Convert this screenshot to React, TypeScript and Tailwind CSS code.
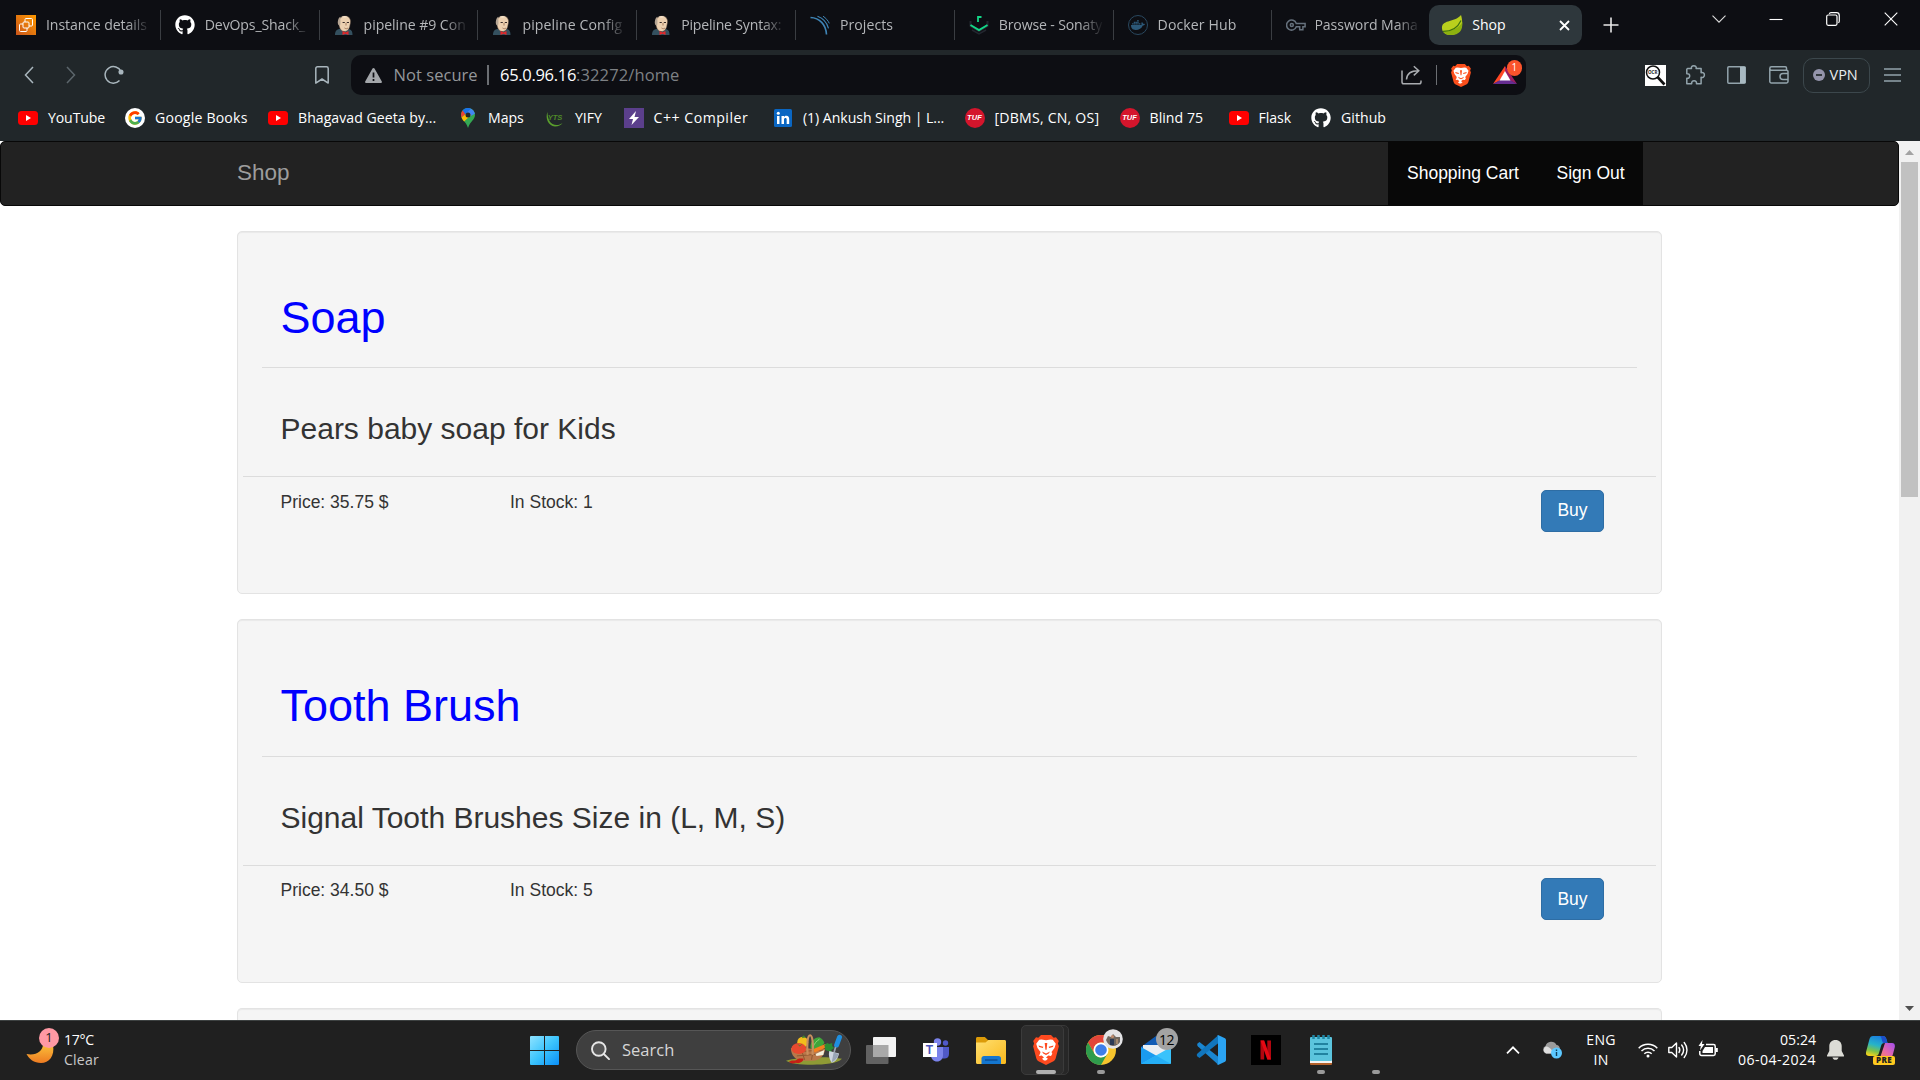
import React from "react";
import { FaGithub, FaDocker } from "react-icons/fa";
import { FcGoogle } from "react-icons/fc";

const JenkinsIcon = () => (
  <svg width="20" height="20" viewBox="0 0 20 20">
    <path d="M1 20c0-4 2-6 5-6l4 3 5-3c3 1 3.500 3 3.500 6z" fill="#34505f" />
    <path d="M5 5C6 1 14-1 16 4c1 2 .5 4 0 6-.5 4-2.500 6.500-5.500 6.500C7 16.500 5.500 13 5 10 3.500 9 3.500 6 5 5z" fill="#ecd0b0" stroke="#57473d" strokeWidth=".5" />
    <path d="M4.600 10C3.300 7 4 3 6.500 1.800 6 5 7 8 6 11z" fill="#b5a594" />
    <path d="M7.500 1.800C9 .6 12 .6 13.500 1.800 12 3 9 3 7.500 1.800z" fill="#f6e2c8" />
    <path d="M8.600 7.500h2.200M12.800 7.500H15" stroke="#3a2c28" strokeWidth="1.200" fill="none" />
    <path d="M12 8v2.500M10.500 13c1.500 1 2.500.8 3.500 0" stroke="#9b6f54" strokeWidth=".9" fill="none" />
    <path d="M8.500 16l3 1.600 3-1.600v4l-3-1.300-3 1.300z" fill="#e0282b" />
  </svg>
);

const AwsIcon = () => (
  <svg width="20" height="20" viewBox="0 0 20 20">
    <defs>
      <linearGradient id="aws" x1="0" y1="1" x2="1" y2="0">
        <stop offset="0" stopColor="#c9551b" />
        <stop offset="1" stopColor="#ff9a00" />
      </linearGradient>
    </defs>
    <rect width="20" height="20" fill="url(#aws)" />
    <g fill="none" stroke="#fff" strokeWidth="1">
      <path d="M9 7V4.500c0-.6.4-1 1-1h5.500c.6 0 1 .4 1 1V10c0 .6-.4 1-1 1H13" />
      <rect x="7" y="7" width="6" height="6" rx="1" />
      <path d="M7 9H4.500c-.6 0-1 .4-1 1v5.500c0 .6.4 1 1 1H10c.6 0 1-.4 1-1V13" />
    </g>
  </svg>
);

const SonarIcon = () => (
  <svg width="20" height="20" viewBox="0 0 20 20" fill="none" stroke="#3f84b5">
    <path d="M.5 2.500c9 .3 15.500 7 16 17" strokeWidth="1.600" />
    <path d="M7.500 1.300c5.500 2 9.500 6.500 11 12" strokeWidth="1.200" />
    <path d="M13 1.200c2.800 1.800 5 4.300 6.300 7.200" strokeWidth="1" />
  </svg>
);

const SonatypeIcon = () => (
  <svg width="20" height="20" viewBox="0 0 20 20" fill="none">
    <path d="M1.500 6v5l8.500 5 8.500-5V6" stroke="#23262f" strokeWidth="2" />
    <path d="M3 15l7 4 7-4" stroke="#23262f" strokeWidth="1.500" />
    <path d="M1.500 10l8.500 5 8.500-5" stroke="#13d687" strokeWidth="2" />
    <path d="M9 7V2h3.500" stroke="#13d687" strokeWidth="1.800" />
  </svg>
);

const DockerIcon = () => (
  <div className="flex size-5 items-center justify-center rounded-full border border-[#29485f] text-[#2c5878]">
    <FaDocker size={14} />
  </div>
);

const KeyIcon = () => (
  <svg width="20" height="20" viewBox="0 0 20 20" fill="none" stroke="#66717d" strokeWidth="1.500">
    <path d="M10.300 8.500a5 5 0 1 0 0 3.200h3.400v3h3.200v-3h2.200V8.500z" />
    <circle cx="5.800" cy="10" r="1.500" />
  </svg>
);

const SpringIcon = () => (
  <svg width="22" height="22" viewBox="0 0 22 24" preserveAspectRatio="none">
    <path d="M20 1c2.500 9 2 21.500-10.500 22C4 23 .5 19 1 14 2 6 14 9 20 1z" fill="#b9cf1d" />
    <path d="M21.300 9c.5 9-3 13.800-11.300 14-4 0-7-1.800-8-4.300C12 18.500 18 15 21.300 9z" fill="#8db10f" />
    <path d="M2 19C11 19 16.500 15.500 20 7" stroke="#3f7110" strokeWidth="1.200" fill="none" />
  </svg>
);

const BraveIcon = ({ width, height, color }: { width: number; height: number; color: string }) => (
  <svg width={width} height={height} viewBox="0 0 26 30" preserveAspectRatio="none">
    <path d="M8 0h10l2.700 2.800 2.300-.5L25.800 6l-.9 2.400 1 2.800-3.200 12c-.4 1.500-1.200 2.400-2.200 3.100L13 30l-7.500-3.700c-1-.7-1.800-1.600-2.200-3.100L.1 11.200l1-2.800L.2 6 3 2.300l2.300.5z" fill={color} />
    <path d="M8.500 4.500l4.500.8 4.500-.8 2.300.3 3 4-1.300 4.200-3 4 .8 1.800-1.300 2.200-2.700-.6-2.300 2 2 1.300-2 1.800-2 0-2-1.800 2-1.300-2.300-2-2.700.6L7 18.800 7.500 17l-3-4-1.300-4.200 3-4z" fill="#fff" />
    <path d="M5.500 10.500l4.800 1.200-.4 1.400-3.800-1zM20.500 10.500l-4.800 1.200.4 1.400 3.800-1zM11.700 8h2.600l-.7 6.800h-1.200zM9 16.500l4 2 4-2-1.200 2L13 20l-2.800-1.500z" fill={color} />
  </svg>
);

const YoutubeIcon = () => (
  <svg width="20" height="20" viewBox="0 0 20 20">
    <rect y="3" width="20" height="14" rx="3.500" fill="#f00" />
    <path d="M8 7l5 3-5 3z" fill="#fff" />
  </svg>
);

const MapsIcon = () => (
  <svg width="20" height="20" viewBox="0 0 20 20">
    <path d="M10 0C6 0 3 3 3 7c0 4.500 5 6.500 7 13 2-6.500 7-8.500 7-13 0-4-3-7-7-7z" fill="#34a853" />
    <path d="M4.600 2.500C3 4.500 2.600 7 3.500 9.500L9 5z" fill="#ea4335" />
    <path d="M4.600 2.500C7-.5 11-.6 13 .7L8 7z" fill="#1a73e8" />
    <path d="M13 .7c2 1 3.400 2.700 3.900 5L11 9 9 4.500z" fill="#4285f4" />
    <path d="M3.500 9.500c.5 1.600 1.500 2.500 2.600 4L13 7 9 5z" fill="#fbbc04" />
    <circle cx="10" cy="7" r="2.500" fill="#22282b" />
  </svg>
);

const YtsIcon = () => (
  <div className="relative flex size-5 items-center justify-center">
    <svg width="20" height="20" viewBox="0 0 20 20" className="absolute inset-0">
      <path d="M2.500 4C0 10 3 18 10 18.500c3.500 0 6-1.500 7.500-3.500C14 18 7 18 4.500 13 3 10 2.500 7 2.500 4z" fill="#5a9e2d" />
    </svg>
    <span className="relative font-['Liberation_Sans'] text-[7.500px] font-bold italic text-[#4f8a28]">YTS</span>
  </div>
);

const BoltIcon = () => (
  <svg width="20" height="20" viewBox="0 0 20 20">
    <rect width="20" height="20" fill="#5b3f8c" />
    <path d="M12 3L5 11h4l-1.500 6L15 9h-4.500z" fill="#fff" />
  </svg>
);

const LinkedinIcon = () => (
  <svg width="20" height="20" viewBox="0 0 20 20">
    <rect x="1" y="1" width="18" height="18" rx="1.500" fill="#0a66c2" />
    <path d="M4 8h2.500v8H4zM8.500 8H11v1.200C11.500 8.300 12.300 7.800 13.400 7.800c2 0 2.800 1.300 2.800 3.400V16h-2.500v-4.300c0-1-.4-1.700-1.200-1.700-.9 0-1.500.7-1.500 1.700V16H8.500z" fill="#fff" />
    <circle cx="5.300" cy="5.300" r="1.500" fill="#fff" />
  </svg>
);

const TufIcon = () => (
  <div className="flex size-5 items-center justify-center rounded-full bg-[#d4152c] font-['Liberation_Sans'] text-[7.500px] font-bold italic text-white">TUF</div>
);

const tabs = [
  { icon: <AwsIcon />, title: "Instance details", cls: "tracking-[-0.100px]" },
  { icon: <FaGithub size={20} className="text-white" />, title: "DevOps_Shack_", cls: "tracking-[-0.150px]" },
  { icon: <JenkinsIcon />, title: "pipeline #9 Con", cls: "tracking-[-0.050px]" },
  { icon: <JenkinsIcon />, title: "pipeline Config", cls: "tracking-[0.120px]" },
  { icon: <JenkinsIcon />, title: "Pipeline Syntax:", cls: "tracking-[-0.200px]" },
  { icon: <SonarIcon />, title: "Projects", cls: "tracking-[0.050px]" },
  { icon: <SonatypeIcon />, title: "Browse - Sonaty", cls: "tracking-[-0.150px]" },
  { icon: <DockerIcon />, title: "Docker Hub", cls: "tracking-[0.100px]" },
  { icon: <KeyIcon />, title: "Password Mana", cls: "tracking-[-0.050px] -ml-[2px]" },
];

function TabStrip() {
  return (
    <div className="flex h-[50px] bg-[#0d0e13]">
      {tabs.map((t, i) => (
        <div key={i} className="relative flex w-[158.8px] shrink-0 items-center pl-4">
          <span className="shrink-0">{t.icon}</span>
          <span className="ml-[10px] w-[106px] overflow-hidden whitespace-nowrap text-[14.100px] text-[#b4b6b9] [mask-image:linear-gradient(90deg,#000_76%,transparent_99%)]">
            <span className={"inline-block " + t.cls}>{t.title}</span>
          </span>
          {i < 8 && <i className="absolute -right-[2px] top-[10px] h-[30px] w-px bg-[#3a3d42]" />}
        </div>
      ))}
      <div className="mt-[5px] flex h-10 w-[153px] items-center rounded-[10px] bg-[#2e373c] pl-[12px] pr-3">
        <SpringIcon />
        <span className="ml-[9px] text-[14.100px] text-white">Shop</span>
        <svg className="ml-auto" width="11" height="11" viewBox="0 0 11 11" stroke="#fff" strokeWidth="1.800">
          <path d="M1 1l9 9M10 1l-9 9" />
        </svg>
      </div>
      <svg className="ml-[21px] mt-[17px]" width="16" height="16" viewBox="0 0 16 16" stroke="#e8e8e8" strokeWidth="1.600">
        <path d="M8 .5v15M.5 8h15" />
      </svg>
      <div className="ml-auto mr-[22px] flex h-[37px] items-center text-white">
        <svg width="14" height="8" viewBox="0 0 14 8" fill="none" stroke="#ddd" strokeWidth="1.100">
          <path d="M.5 .7L7 7.200 13.500.7" />
        </svg>
        <svg className="ml-[43px]" width="14" height="14" viewBox="0 0 14 14" stroke="#fff" strokeWidth="1.100">
          <path d="M.5 7.500h13" />
        </svg>
        <svg className="ml-[43px]" width="14" height="14" viewBox="0 0 14 14" fill="none" stroke="#fff" strokeWidth="1.200">
          <rect x=".7" y="3" width="10.300" height="10.300" rx="1.500" />
          <path d="M3.300 1.800C3.500 1 4 .7 5 .7h5.500c1.700 0 2.800 1 2.800 2.800V9c0 1-.4 1.600-1 1.800" />
        </svg>
        <svg className="ml-[44px]" width="14" height="14" viewBox="0 0 14 14" stroke="#fff" strokeWidth="1.100">
          <path d="M.7 .7l12.600 12.600M13.300.7L.7 13.300" />
        </svg>
      </div>
    </div>
  );
}

function BatIcon() {
  return (
    <div className="relative ml-[22px] h-[18px] w-6">
      <svg width="24" height="18" viewBox="0 0 24 18">
        <path d="M12 0L0 18l7-3.500L12 6z" fill="#ff4724" />
        <path d="M12 0l12 18-7-3.500L12 6z" fill="#9e1f63" />
        <path d="M0 18h24l-7-4H7z" fill="#662d91" />
        <path d="M12 5l5.500 9.500h-11z" fill="#fff" />
      </svg>
      <span className="absolute -top-[6px] left-[13.500px] flex size-[15.500px] items-center justify-center rounded-full bg-[#fb542b] text-[10px] text-white">1</span>
    </div>
  );
}

function Toolbar() {
  return (
    <div className="flex h-[50px] items-center bg-[#21272a]">
      <svg className="ml-[23.500px]" width="10" height="18" viewBox="0 0 10 18" fill="none" stroke="#a9b6bd" strokeWidth="1.500">
        <path d="M9 1L1.500 9 9 17" />
      </svg>
      <svg className="ml-[32.500px]" width="10" height="18" viewBox="0 0 10 18" fill="none" stroke="#5c666c" strokeWidth="1.500">
        <path d="M1 1l7.500 8L1 17" />
      </svg>
      <svg className="ml-[28px]" width="20" height="20" viewBox="0 0 20 20" fill="none" stroke="#a9b6bd" strokeWidth="1.500">
        <path d="M15.500 15.500A8.300 8.300 0 1 1 17 6.500" />
        <circle cx="17" cy="7" r="1.800" fill="#a9b6bd" />
      </svg>
      <svg className="ml-[191px]" width="14" height="18" viewBox="0 0 14 18" fill="none" stroke="#a9b6bd" strokeWidth="1.500" strokeLinejoin="round">
        <path d="M.8 2.500c0-1 .7-1.700 1.700-1.700h9c1 0 1.700.7 1.700 1.700v14.600L7 13l-6.200 4.100z" />
      </svg>
      <div className="ml-[22px] flex h-10 w-[1175px] items-center rounded-[10px] bg-[#0d0e13]">
        <svg className="ml-[14px]" width="17" height="15" viewBox="0 0 17 15">
          <path d="M8.500 0c.5 0 .8.200 1 .6l7.200 12.600c.5.900 0 1.800-1 1.800H1.300c-1 0-1.500-.9-1-1.800L7.500.6c.2-.4.500-.6 1-.6z" fill="#a3a6aa" />
          <path d="M8.500 4.500v5M8.500 11v2" stroke="#0d0e13" strokeWidth="1.700" />
        </svg>
        <span className="ml-[11.500px] w-[84.500px] whitespace-nowrap text-[16.500px] tracking-[0.050px] text-[#94979b]">Not secure</span>
        <i className="ml-[9px] h-5 w-0.5 bg-[#6b6e73]" />
        <span className="ml-[11px] whitespace-nowrap text-[16.500px] text-[#7e8185]">
          <span className="tracking-[-0.300px] text-white">65.0.96.16</span>
          <span className="tracking-[0.120px]">:32272/home</span>
        </span>
        <svg className="ml-auto" width="21" height="20" viewBox="0 0 21 20" fill="none" stroke="#a9acb0" strokeWidth="1.500">
          <path d="M1 5.500V17c0 1 .8 1.800 1.800 1.800h15.400c1 0 1.800-.8 1.800-1.800v-1.500" />
          <path d="M5.500 14.500c.3-5.500 3.500-8.700 12-8.700M12.800 1.200l5 4.600-5 4.600" />
        </svg>
        <i className="ml-[14px] h-5 w-px bg-[#6b6e73]" />
        <span className="ml-[14px]">
          <BraveIcon width={20} height={23} color="#fb4f1c" />
        </span>
        <BatIcon />
        <i className="w-[9px]" />
      </div>
      <div className="relative ml-[119px] size-[21px] bg-white">
        <svg width="21" height="21" viewBox="0 0 21 21" fill="none" stroke="#111">
          <circle cx="8" cy="7.500" r="6.500" strokeWidth="1.500" />
          <path d="M12.500 12l7 7.500" strokeWidth="2.600" />
        </svg>
        <span className="absolute left-[3px] top-[3px] text-[4.500px] font-bold leading-[8px] text-[#222]">OCR</span>
      </div>
      <svg className="ml-[19px]" width="21" height="20" viewBox="0 0 21 20" fill="none" stroke="#93a4ac" strokeWidth="1.500" strokeLinejoin="round">
        <path d="M2.500 3.500h4C6 1.800 7 .8 8.800.8s2.800 1 2.300 2.700h5v4.200c1.800-.5 3.300.5 3.300 2.300s-1.500 2.800-3.300 2.300v6.400h-4.600c.3-1.800-.8-2.900-2.400-2.900s-2.700 1.100-2.400 2.900H1.800v-5.400c1.800.3 2.900-.8 2.900-2.300S3.600 8.400 1.800 8.700V4.200z" />
      </svg>
      <svg className="ml-[21px]" width="19" height="18" viewBox="0 0 19 18" fill="none" stroke="#93a4ac" strokeWidth="1.500">
        <rect x=".8" y=".8" width="17.400" height="16.400" rx="1" />
        <rect x="13" y="1" width="5.500" height="16" fill="#a8b9c1" stroke="none" />
      </svg>
      <svg className="ml-[23px]" width="20" height="18" viewBox="0 0 20 18" fill="none" stroke="#93a4ac" strokeWidth="1.500">
        <path d="M17.500 4V2c0-.7-.5-1.200-1.200-1.200H2.500A1.700 1.700 0 0 0 2.500 4.200h15c.8 0 1.500.6 1.500 1.400v10c0 .8-.6 1.400-1.400 1.400H2.400c-.9 0-1.600-.7-1.600-1.500V2.500" />
        <path d="M19 7.500h-5a3 3 0 0 0 0 6h5" />
      </svg>
      <div className="ml-[14px] flex h-[35px] w-[67px] items-center rounded-[10px] border border-[#3c474c] pl-[9px] text-[14.500px] text-[#e9edef]">
        <svg className="mr-[4.500px] shrink-0" width="12" height="12" viewBox="0 0 12 12">
          <circle cx="6" cy="6" r="6" fill="#9494ab" />
          <path d="M3 6h6" stroke="#21272a" strokeWidth="1.700" />
        </svg>
        VPN
      </div>
      <svg className="ml-[14px]" width="17" height="14" viewBox="0 0 17 14" stroke="#93a4ac" strokeWidth="1.400">
        <path d="M0 1h17M0 7h17M0 13h17" />
      </svg>
    </div>
  );
}

function Bookmark({ icon, label, className }: { icon: React.ReactNode; label: string; className: string }) {
  return (
    <div className={"flex shrink-0 items-center gap-[10px] whitespace-nowrap " + className}>
      <span className="size-5 shrink-0">{icon}</span>
      <span>{label}</span>
    </div>
  );
}

function BookmarksBar() {
  return (
    <div className="flex h-[41px] bg-[#21272a] pb-[5px] pl-[18px] text-[14.100px] text-white">
      <Bookmark className="w-[107px] tracking-[-0.120px]" icon={<YoutubeIcon />} label="YouTube" />
      <Bookmark className="w-[143px] tracking-[0.200px]" icon={<div className="size-5 rounded-full bg-white p-[2px]"><FcGoogle size={16} /></div>} label="Google Books" />
      <Bookmark className="w-[190px] tracking-[0.030px]" icon={<YoutubeIcon />} label="Bhagavad Geeta by..." />
      <Bookmark className="w-[87px] tracking-[-0.050px]" icon={<MapsIcon />} label="Maps" />
      <Bookmark className="w-[78.500px] tracking-[-0.050px]" icon={<YtsIcon />} label="YIFY" />
      <Bookmark className="w-[149.500px] tracking-[0.520px]" icon={<BoltIcon />} label="C++ Compiler" />
      <Bookmark className="w-[191.500px] tracking-[-0.050px]" icon={<LinkedinIcon />} label="(1) Ankush Singh | L..." />
      <Bookmark className="w-[155px] tracking-[0.220px]" icon={<TufIcon />} label="[DBMS, CN, OS]" />
      <Bookmark className="w-[109px] tracking-[0.050px]" icon={<TufIcon />} label="Blind 75" />
      <Bookmark className="w-[82.500px] tracking-[-0.050px]" icon={<YoutubeIcon />} label="Flask" />
      <Bookmark className="tracking-[0.050px]" icon={<FaGithub size={20} />} label="Github" />
    </div>
  );
}

function Product({ name, description, price, stock, tall }: { name: string; description: string; price: string; stock: number; tall?: boolean }) {
  return (
    <article className={"mb-[25px] shrink-0 rounded-[5px] border border-[#e3e3e3] bg-[#f5f5f5] px-[5px] shadow-[inset_0_1px_1px_rgba(0,0,0,0.05)] " + (tall ? "h-[364px]" : "h-[363px]")}>
      <div className={"mx-[19px] border-b border-[#dcdcdc] pl-[18.500px] pt-[61px] " + (tall ? "h-[137px]" : "h-[136px]")}>
        <h1 className="text-[45px] leading-[50px] text-[#0000ff]">{name}</h1>
      </div>
      <div className="h-[109px] border-b border-[#dcdcdc] pl-[37.500px] pt-[44px]">
        <h3 className="text-[30px] leading-[34px] text-[#333]">{description}</h3>
      </div>
      <div className={"flex pl-[37.500px] text-[17.500px] leading-[25px] text-[#333] " + (tall ? "pt-[12px]" : "pt-[13px]")}>
        <span className="w-[229.500px]">Price: {price} $</span>
        <span>In Stock: {stock}</span>
        <button className={"ml-auto mr-[52px] h-[42px] w-[63px] rounded-[5px] border border-[#2e6da4] bg-[#337ab7] text-center text-white " + (tall ? "pt-px" : "pb-px")}>Buy</button>
      </div>
    </article>
  );
}

function Page() {
  return (
    <div className="flex h-[879px] bg-white font-['Liberation_Sans',Arial,sans-serif]">
      <main className="flex h-full w-[1899px] flex-col overflow-hidden">
        <nav className="flex h-[65px] shrink-0 rounded-[5px] border border-[#080808] bg-[#222] pl-[236px] pr-[255px]">
          <span className="pt-[18px] text-[22.500px] leading-[25px] text-[#9d9d9d]">Shop</span>
          <div className="ml-auto flex w-[255px] bg-[#080808] pl-[19px] text-[17.500px] leading-[25px] text-white">
            <span className="w-[149.500px] pt-[19px]">Shopping Cart</span>
            <span className="pt-[19px]">Sign Out</span>
          </div>
        </nav>
        <div className="ml-[237px] mt-[25px] flex w-[1425px] flex-col">
          <Product name="Soap" description="Pears baby soap for Kids" price="35.75" stock={1} />
          <Product name="Tooth Brush" description="Signal Tooth Brushes Size in (L, M, S)" price="34.50" stock={5} tall />
          <div className="h-3 rounded-t-[5px] border border-b-0 border-[#e3e3e3] bg-[#f5f5f5] shadow-[inset_0_1px_1px_rgba(0,0,0,0.05)]" />
        </div>
      </main>
      <div className="flex w-[21px] flex-col items-center bg-[#f1f1f1]">
        <svg className="mt-[9px]" width="9" height="5" viewBox="0 0 9 5">
          <path d="M0 5L4.500 0 9 5z" fill="#a3a3a3" />
        </svg>
        <div className="mt-[7px] h-[335px] w-[17px] bg-[#c1c1c1]" />
        <svg className="mb-[9px] mt-auto" width="9" height="5" viewBox="0 0 9 5">
          <path d="M0 0l4.500 5L9 0z" fill="#505050" />
        </svg>
      </div>
    </div>
  );
}

const StartIcon = () => (
  <svg width="29" height="29" viewBox="0 0 29 29">
    <defs>
      <linearGradient id="win" x1="0" y1="0" x2="1" y2="1">
        <stop offset="0" stopColor="#8fe3ff" />
        <stop offset=".5" stopColor="#3cc4fd" />
        <stop offset="1" stopColor="#0a8ff8" />
      </linearGradient>
    </defs>
    <path d="M1 0h13v14H0V1a1 1 0 0 1 1-1zM15 0h13a1 1 0 0 1 1 1v13H15zM0 15h14v14H1a1 1 0 0 1-1-1zM15 15h14v13a1 1 0 0 1-1 1H15z" fill="url(#win)" />
  </svg>
);

const BasketIcon = () => (
  <svg width="57" height="32" viewBox="0 0 58 32">
    <path d="M0 27c10-4 44-5 57-2-5 5-18 6-30 6-14 0-22-1-27-4z" fill="#8f9a35" />
    <path d="M5 14c0 8 5 13 13 13h9c8 0 12-6 13-12z" fill="#b9784a" />
    <path d="M8 18l30-2M11 22l25-2M15 14l4 12M28 14l-2 12" stroke="#8f5630" strokeWidth="1" />
    <circle cx="17" cy="8" r="5.500" fill="#f3bd1c" />
    <path d="M16 4l2-3 2 2z" fill="#3a8a2b" />
    <ellipse cx="13" cy="14.500" rx="7.500" ry="5.500" fill="#e8492f" />
    <path d="M11 9.500l3 2 3-2-3 3z" fill="#3a8a2b" />
    <path d="M25 14C24 8 29 3 34 3c2 1 5 4 5 6-3 4-6 7-11 7z" fill="#3fa53a" />
    <path d="M27 14c2-5 4-7 7-9" stroke="#8fd67b" strokeWidth="1" fill="none" />
    <path d="M28 15l12-5c2 0 3 2 1 3.500l-12 5z" fill="#f5811f" />
    <path d="M30 20l9-4-1 5-7 1z" fill="#f3efdc" />
    <path d="M22 21C21 10 22 1 24.500 1S28 10 27 21" fill="none" stroke="#c98f5f" strokeWidth="2.200" />
    <path d="M39 11l3-2 2 1 3-1 0 3 2 2-3 2 1 3-4-2-3-1z" fill="#2b8c33" />
    <path d="M54.500 3l-3 8" stroke="#1f8fe0" strokeWidth="5" strokeLinecap="round" />
    <path d="M50.500 13l-1.500 5" stroke="#9aa4b0" strokeWidth="1.800" />
    <path d="M44 17l10 2.500c-1 4.500-3 8-7.500 9.500-2.500-3.500-3.500-8-2.500-12z" fill="#cdd5df" />
    <path d="M48.500 18.500l-2 10c4-2 6-5 7-8.500z" fill="#98a5b5" />
    <path d="M3 28c4-3 6 0 8-2s5-1 7-1c-1 4-5 5-8 4-3 1-5 1-7-1z" fill="#c61f16" />
  </svg>
);

const TaskViewIcon = () => (
  <svg width="30" height="27" viewBox="0 0 30 27">
    <rect y="8" width="22.500" height="19" rx="1" fill="#626262" />
    <rect x="7" width="23" height="20" rx="1" fill="#f3f3f3" />
    <path d="M7 8h15.500v12H7z" fill="#a9a9a9" />
  </svg>
);

const TeamsIcon = () => (
  <div className="relative h-[24px] w-[27px]">
    <svg width="27" height="24" viewBox="0 0 27 24">
      <circle cx="22.500" cy="5" r="2.700" fill="#5059c9" />
      <path d="M17 9h9v7c0 3-2 4.500-4.500 4.500H17z" fill="#5059c9" />
      <circle cx="14.500" cy="4" r="3.700" fill="#7b83eb" />
      <path d="M8 9h12v8c0 4-2.500 6.500-6 6.500s-6-2.500-6-6.500z" fill="#7b83eb" />
      <rect y="5" width="14" height="14" fill="#fff" />
    </svg>
    <span className="absolute left-0 top-[5px] w-[14px] text-center font-['Liberation_Sans'] text-[12px] font-bold leading-[14px] text-[#4b53bc]">T</span>
  </div>
);

const FolderIcon = () => (
  <svg width="30" height="27" viewBox="0 0 30 27">
    <defs>
      <linearGradient id="folder" x1="0" y1="0" x2="1" y2="1">
        <stop offset="0" stopColor="#ffdf70" />
        <stop offset="1" stopColor="#f9b91c" />
      </linearGradient>
    </defs>
    <path d="M0 1.500C0 .6.600 0 1.500 0h7.300l3.200 3H28v5H0z" fill="#dc9b08" />
    <path d="M0 5.500h9.500l3-2.500h16c.9 0 1.500.6 1.500 1.500V25.500c0 .9-.6 1.500-1.500 1.500h-27C.6 27 0 26.400 0 25.500z" fill="url(#folder)" />
    <path d="M5.500 27v-5.500c0-1.500 1-2.500 2.500-2.500h14.500c1.500 0 2.500 1 2.500 2.500V27z" fill="#1476cf" />
    <path d="M9 23h12.500" stroke="#0b4a8c" strokeWidth="1.300" />
  </svg>
);

const ChromeIcon = () => (
  <svg width="30" height="30" viewBox="0 0 30 30">
    <circle cx="15" cy="15" r="15" fill="#f7c52d" />
    <path d="M15 0a15 15 0 0 1 13 7.500H15A7.500 7.500 0 0 0 8.500 18.700L2 7.500A15 15 0 0 1 15 0z" fill="#e2453a" />
    <path d="M2 7.500l6.500 11.200A7.500 7.500 0 0 0 15 22.500l6.400-3.700L15 30A15 15 0 0 1 2 7.500z" fill="#2f9c4c" />
    <circle cx="15" cy="15" r="7.500" fill="#fff" />
    <circle cx="15" cy="15" r="5.800" fill="#3e7ee8" />
  </svg>
);

const MailIcon = () => (
  <svg width="30" height="28" viewBox="0 0 30 28">
    <path d="M0 11L15 0l15 11v4H0z" fill="#0f5bb5" />
    <path d="M2 9h26v8l-13 6-13-7z" fill="#e9eef3" />
    <path d="M0 11l30 17H1a1 1 0 0 1-1-1z" fill="#1a9bf0" />
    <path d="M30 11v16a1 1 0 0 1-1 1H0z" fill="#39c2fb" />
    <path d="M15 19.500L30 28H0z" fill="#25aef6" />
  </svg>
);

const CodeIcon = () => (
  <svg width="30" height="30" viewBox="0 0 30 30">
    <path d="M1.500 8.500l2-1.500 19 15-.5 7.500-20-18c-1-1-1-2-.5-3z" fill="#1a86d0" />
    <path d="M1.500 21.500l2 1.500 19-15L22 .5l-20.500 18c-1 1-1 2 0 3z" fill="#1176bd" />
    <path d="M22 0l7 3.300c.6.300 1 .9 1 1.600v20.200c0 .7-.4 1.300-1 1.600L22 30c-.8-.4-.5-.8 0-2V2c-.5-1.200-.8-1.600 0-2z" fill="#2ba4f3" />
  </svg>
);

const NetflixIcon = () => (
  <svg width="30" height="30" viewBox="0 0 30 30">
    <rect width="30" height="30" fill="#000" />
    <rect x="9.500" y="5.500" width="3.700" height="19" fill="#b1060f" />
    <rect x="16.300" y="5.500" width="3.700" height="19" fill="#b1060f" />
    <path d="M9.500 5.500h3.700L20 24.500h-3.700z" fill="#e50914" />
  </svg>
);

const NotepadIcon = () => (
  <svg width="22" height="30" viewBox="0 0 22 30">
    <rect y="24" width="22" height="6" rx="1" fill="#b2602a" />
    <rect y="22" width="22" height="6" fill="#f2f2f2" />
    <rect y="2" width="22" height="24" rx="1" fill="#5bc4dd" />
    <path d="M4 9h14M4 14h14M4 19h14" stroke="#0f6d8c" strokeWidth="1.700" />
    <path d="M3.500 0v4M8.500 0v4M13.500 0v4M18.500 0v4" stroke="#1f87a5" strokeWidth="2.500" />
  </svg>
);

const CopilotIcon = () => (
  <div className="relative h-[29px] w-[30px]">
    <svg width="29" height="22" viewBox="0 0 29 22">
      <defs>
        <linearGradient id="cpa" x1=".6" y1="0" x2=".3" y2="1">
          <stop offset="0" stopColor="#1a7fe0" />
          <stop offset=".45" stopColor="#26b3c9" />
          <stop offset=".75" stopColor="#7cc24a" />
          <stop offset="1" stopColor="#f2d21c" />
        </linearGradient>
        <linearGradient id="cpb" x1="1" y1="0" x2="0" y2="1">
          <stop offset="0" stopColor="#a24df0" />
          <stop offset=".6" stopColor="#e86aa6" />
          <stop offset="1" stopColor="#f58a5c" />
        </linearGradient>
      </defs>
      <path d="M7 0h10c3 0 3.500 3 4.500 7h-3c-2 0-3 1-3.500 3l-2 7c-.6 2-1.500 3-3.500 3H3c-3 0-3.500-2-2.700-5L3.500 3C4.200 1 5 0 7 0z" fill="url(#cpa)" />
      <path d="M14 0h3c3 0 3.500 3 4.500 7h-4C16 7 16 1 14 0z" fill="#1c4fc9" />
      <path d="M19 7h7c2.500 0 3.300 2 2.700 4.500L27 18c-.6 2.500-2 4-4 4h-9z" fill="url(#cpb)" />
    </svg>
    <span className="absolute bottom-0 left-[7px] flex h-[9px] w-[22px] items-center justify-center rounded-[2px] bg-[#ffc91f] text-[8px] font-extrabold tracking-[0.400px] text-[#222]">PRE</span>
  </div>
);

const Dot = ({ wide }: { wide?: boolean }) => (
  <i className={"absolute bottom-[5px] left-1/2 h-1 -translate-x-1/2 rounded-full " + (wide ? "w-5 bg-[#b0b0b0]" : "w-2 bg-[#9a9a9a]")} />
);

function Slot({ children, dot }: { children?: React.ReactNode; dot?: boolean }) {
  return (
    <div className="relative flex h-full w-[55px] shrink-0 items-center justify-center">
      {children}
      {dot && <Dot />}
    </div>
  );
}

function Taskbar() {
  return (
    <div className="flex h-[60px] items-center border-t border-[#3d4141] bg-[#202020] pb-px text-white">
      <div className="relative ml-[26px] h-[28px] w-[29px]">
        <svg width="29" height="36" viewBox="0 0 29 36">
          <defs>
            <linearGradient id="moon" x1="0" y1="0" x2="0" y2="1">
              <stop offset="0" stopColor="#fbc23b" />
              <stop offset="1" stopColor="#ee7b22" />
            </linearGradient>
          </defs>
          <path d="M27 9c2 11-4 18-12 18-7 0-12-4-14.500-9C10 20 17 15 17 8z" fill="url(#moon)" />
        </svg>
        <span className="absolute -top-[8px] left-[13px] flex size-5 items-center justify-center rounded-full bg-[#ff99a4] text-[13px] text-[#222]">1</span>
      </div>
      <div className="-mt-px ml-[9px] w-[60px] text-[14.100px] leading-[20px]">
        <div className="tracking-[-0.300px]">17°C</div>
        <div className="tracking-[0.200px] text-[#c8c8c8]">Clear</div>
      </div>
      <div className="ml-[406px]">
        <StartIcon />
      </div>
      <div className="ml-[17px] flex h-10 w-[275px] items-center rounded-full border border-[#565656] bg-[#3f3f3f] pl-[14px] pr-[7px]">
        <svg width="19" height="19" viewBox="0 0 19 19" fill="none" stroke="#e6e6e6" strokeWidth="1.900">
          <circle cx="7.800" cy="8" r="6.800" fill="#555" />
          <path d="M12.800 13l5.200 5.200" strokeLinecap="round" />
        </svg>
        <span className="ml-[12px] text-[16.500px] text-[#d6d6d6]">Search</span>
        <span className="ml-auto">
          <BasketIcon />
        </span>
      </div>
      <div className="ml-[2.500px] flex h-full items-center">
        <Slot><TaskViewIcon /></Slot>
        <Slot><TeamsIcon /></Slot>
        <Slot><FolderIcon /></Slot>
        <div className="relative flex h-full w-[55px] items-center">
          <div className="absolute left-[6px] top-1 h-[50px] w-[44px] rounded-[5px] border border-[#383838] bg-[#272727]" />
          <div className="absolute left-[2px] top-1 h-[50px] w-[43px] rounded-[5px] border border-[#3b3b3b] bg-[#2d2d2d]" />
          <span className="relative ml-[14px]">
            <BraveIcon width={26} height={30} color="#ff4a1f" />
          </span>
          <Dot wide />
        </div>
        <Slot dot>
          <ChromeIcon />
          <svg className="absolute left-[29px] top-[8px]" width="20" height="20" viewBox="0 0 20 20">
            <circle cx="10" cy="10" r="9.800" fill="#e4e4e6" />
            <path d="M3 11l2-4 3 1 2-3 3 3 4 0 0 5c-1 2-4 4-7 4s-6-3-7-6z" fill="#6f675f" />
            <path d="M7 10h4v6H7z" fill="#2b3a55" />
            <path d="M13 10h2v5h-2z" fill="#a3886d" />
            <circle cx="9.500" cy="7.500" r="1.600" fill="#c08d6f" />
          </svg>
        </Slot>
        <Slot>
          <MailIcon />
          <span className="absolute left-[27px] top-[7px] flex size-[22px] items-center justify-center rounded-full bg-[#a3a3a3] text-[14px] tracking-[-0.500px] text-black">12</span>
        </Slot>
        <Slot><CodeIcon /></Slot>
        <Slot><NetflixIcon /></Slot>
        <Slot dot><NotepadIcon /></Slot>
        <Slot dot />
      </div>
      <div className="ml-auto flex h-full items-center pr-[24px]">
        <svg width="14" height="8" viewBox="0 0 14 8" fill="none" stroke="#fff" strokeWidth="1.700">
          <path d="M1 7.300l6-6 6 6" />
        </svg>
        <svg className="ml-[22px]" width="20" height="18" viewBox="0 0 20 18">
          <path d="M4 12.500A4 4 0 0 1 3.500 5 6 6 0 0 1 14.500 4c2 0 3.500 2 3.500 4.500l-4 4z" fill="#9b9b9b" />
          <path d="M4 12.500A3.800 3.800 0 0 1 4 5.500c3 0 5 2 8 7z" fill="#dedede" />
          <circle cx="14.500" cy="12" r="5.500" fill="#5cc8ff" />
          <path d="M14.500 11v4M14.500 8.500v1.400" stroke="#10405c" strokeWidth="1.400" />
        </svg>
        <div className="ml-[20px] w-[38px] text-center text-[14.100px] leading-[20px]">
          <div className="tracking-[0.200px]">ENG</div>
          <div className="tracking-[0.200px]">IN</div>
        </div>
        <svg className="ml-[18px]" width="20" height="16" viewBox="0 0 20 16" fill="none" stroke="#fff" strokeWidth="1.500">
          <path d="M.7 6.200a13 13 0 0 1 18.600 0M3.500 9a9.200 9.200 0 0 1 13 0M6.300 11.700a5.200 5.200 0 0 1 7.400 0" />
          <circle cx="10" cy="14" r="1.500" fill="#fff" stroke="none" />
        </svg>
        <svg className="ml-[10px]" width="20" height="18" viewBox="0 0 20 18" fill="none" stroke="#fff" strokeWidth="1.400">
          <path d="M.8 6.500h3L8.500 2v14l-4.700-4.500h-3z" strokeLinejoin="round" />
          <path d="M11 6.500c1 1.500 1 3.500 0 5M13.700 4c2.300 3 2.300 7 0 10M16.200 1.500c3.700 4.500 3.700 10.500 0 15" strokeLinecap="round" />
        </svg>
        <svg className="-mt-[3px] ml-[10px]" width="20" height="18" viewBox="0 0 20 18" fill="none" stroke="#fff" strokeWidth="1.500">
          <path d="M8 4.500h7.500c1 0 1.700.7 1.700 1.700v7.600c0 1-.7 1.700-1.700 1.700H3.500c-1 0-1.700-.7-1.700-1.700V11" />
          <path d="M18.800 8v4" strokeWidth="2" />
          <path d="M7 7h8v6H4.500v-2z" fill="#fff" stroke="none" />
          <path d="M4.500 0L.5 6h2.300L2 10.500 6.500 4H4z" fill="#fff" stroke="none" />
        </svg>
        <div className="-mt-px ml-[18px] w-[80px] whitespace-nowrap text-right text-[14.100px] leading-[20px]">
          <div>05:24</div>
          <div className="tracking-[0.450px]">06-04-2024</div>
        </div>
        <svg className="ml-[11px]" width="17" height="20" viewBox="0 0 17 20">
          <path d="M8.500 0C4.800 0 2.300 2.600 2.300 6v5L0 15.500c-.2.500 0 1 .6 1h15.800c.6 0 .8-.5.6-1L14.700 11V6c0-3.400-2.500-6-6.200-6z" fill="#dcdcd6" />
          <path d="M5.500 17.500h6c-.4 1.500-1.500 2.300-3 2.300s-2.600-.8-3-2.300z" fill="#dcdcd6" />
        </svg>
        <div className="ml-[22px]">
          <CopilotIcon />
        </div>
      </div>
    </div>
  );
}

export default function App() {
  return (
    <div className="h-[1080px] w-[1920px] overflow-hidden font-['Open_Sans',sans-serif]">
      <TabStrip />
      <Toolbar />
      <BookmarksBar />
      <Page />
      <Taskbar />
    </div>
  );
}
